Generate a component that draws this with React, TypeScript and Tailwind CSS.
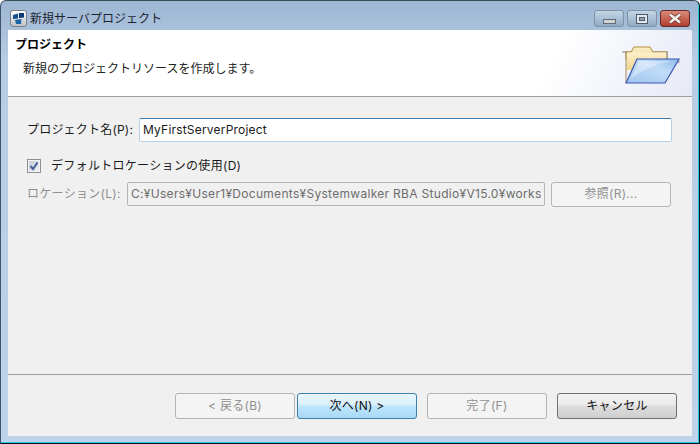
const font = { fontFamily: 'Inter, "Noto Sans CJK JP", sans-serif' };

function AppIcon() {
  return (
    <div className="w-[17px] h-[17px] rounded-[3px] border border-[#7d8086] bg-gradient-to-b from-[#ffffff] to-[#bfc2c6] flex items-center justify-center">
      <svg width="13" height="13" viewBox="0 0 13 13">
        <path d="M1 3 L6 1.5 L6 6.5 L1 7 Z" fill="#15508f" />
        <path d="M7 1 L12 1 L12 5.5 L7 6 Z" fill="#0f3a78" />
        <path d="M3 8 L9.5 7 L9 12 L4 12 Z" fill="#1a66a8" />
      </svg>
    </div>
  );
}

function CaptionButtons() {
  return (
    <div className="flex gap-[3px] self-start mt-[9px]">
      <div className="w-[30px] h-[17px] rounded-[3px] border border-[#7f93a8] bg-gradient-to-b from-[#c4d6e6] to-[#8fabc4] flex items-end justify-center pb-[2px]">
        <div className="w-[13px] h-[5px] bg-[#d4d4d4] border border-[#5f6a78]" />
      </div>
      <div className="w-[30px] h-[17px] rounded-[3px] border border-[#7f93a8] bg-gradient-to-b from-[#c4d6e6] to-[#8fabc4] flex items-center justify-center">
        <div className="w-[12px] h-[10px] bg-[#e4e8ec] border border-[#4e5a6a] flex items-center justify-center">
          <div className="w-[6px] h-[4px] bg-[#8fa4b8] border border-[#4e5a6a]" />
        </div>
      </div>
      <div className="w-[30px] h-[17px] rounded-[3px] border border-[#5f2a2a] bg-gradient-to-b from-[#dc8a78] to-[#b03c2c] flex items-center justify-center">
        <svg width="14" height="11" viewBox="0 0 14 11">
          <path d="M2 1.5 L12 9.5 M12 1.5 L2 9.5" stroke="#5e2b26" strokeWidth="4" />
          <path d="M2 1.5 L12 9.5 M12 1.5 L2 9.5" stroke="#f0ece8" strokeWidth="2.8" />
        </svg>
      </div>
    </div>
  );
}

function Folder() {
  return (
    <svg width="60" height="40" viewBox="0 0 60 40">
      <defs>
        <linearGradient id="back" x1="0" y1="0" x2="0" y2="1">
          <stop offset="0" stopColor="#fdf0cc" />
          <stop offset="1" stopColor="#f0d48a" />
        </linearGradient>
        <linearGradient id="front" x1="0" y1="1" x2="1" y2="0">
          <stop offset="0" stopColor="#9cc4ee" />
          <stop offset="0.6" stopColor="#c2dcf6" />
          <stop offset="1" stopColor="#8fbcea" />
        </linearGradient>
      </defs>
      <path d="M1 6 H47" stroke="#a8a8a8" strokeWidth="1.5" fill="none" />
      <path d="M57 13 L58 17" stroke="#a8a8a8" strokeWidth="1.5" fill="none" />
      <path d="M5 6 H10 L13 1 H29 L32 6 H46 V13 H5 Z" fill="url(#back)" stroke="#b08c3c" strokeWidth="1" />
      <path d="M5.5 6.5 H45.5 V24 H5.5 Z" fill="url(#back)" />
      <path d="M46 6 V13" stroke="#8f8f8f" strokeWidth="1" />
      <path d="M5 5 V36" stroke="#a08c5c" strokeWidth="1" />
      <path d="M5 37 L16 13 H58 L44 37 Z" fill="url(#front)" stroke="#3a54b0" strokeWidth="1.2" />
      <path d="M9 34 L18 15 H50 C38 18 22 22 9 34 Z" fill="#ffffff" opacity="0.35" />
    </svg>
  );
}

function WizardButton({ label, kind }: { label: string; kind: "disabled" | "primary" | "normal" }) {
  const cls =
    kind === "disabled"
      ? "border-[#b4b4b4] bg-[#f4f4f4] text-[#8f8f8f]"
      : kind === "primary"
        ? "border-[#3c7fb1] bg-[linear-gradient(to_bottom,#eaf6fd_0%,#d9f0fc_45%,#bee6fd_50%,#a7d9f5_100%)] text-[#111111]"
        : "border-[#707070] bg-[linear-gradient(to_bottom,#f2f2f2_0%,#ebebeb_45%,#dddddd_50%,#cfcfcf_100%)] text-[#111111]";
  return (
    <div className={`w-[120px] h-[26px] rounded-[3px] border flex items-center justify-center text-[12px] leading-none whitespace-pre tracking-[0.3px] ${cls}`}>
      {label}
    </div>
  );
}

export default function App() {
  return (
    <div
      style={font}
      className="w-[700px] h-[444px] overflow-hidden flex flex-col rounded-t-[6px] border-x border-t border-b border-t-[#3a4a58] border-l-[#3f5468] border-r-[#0c1418] border-b-[#0c1418] shadow-[inset_-1px_-1px_0_#22c8e8] bg-[linear-gradient(to_bottom,#9db6d2_0px,#b6cde4_60px,#bcd3ea_444px)] text-[12px] text-[#1a1a1a]"
    >
      <div className="h-[29px] shrink-0 flex items-start pl-[9px] pr-[9px]">
        <div className="flex items-center gap-[3px] mt-[9px] h-[17px]">
          <AppIcon />
          <span className="text-[12px] leading-none text-[#1c2430]">新規サーバプロジェクト</span>
        </div>
        <div className="flex-1" />
        <CaptionButtons />
      </div>

      <div className="flex-1 mx-[7px] mb-[7px] flex flex-col bg-[#f0f0f0] min-h-0">
        <div className="h-[66px] shrink-0 flex justify-between bg-[linear-gradient(115deg,#ffffff_78%,#e6eaf6_100%)] pr-[11px]">
          <div className="pl-[7px]">
            <div className="mt-[8px] text-[12px] leading-[14px] font-bold text-[#000000]">プロジェクト</div>
            <div className="mt-[10px] pl-[8px] text-[12px] leading-[14px] text-[#222222]">新規のプロジェクトリソースを作成します。</div>
          </div>
          <div className="mt-[16px]">
            <Folder />
          </div>
        </div>
        <div className="h-px shrink-0 bg-[#a0a0a0]" />

        <div className="flex-1 pl-[19px] pr-[20px] pt-[21px]">
          <div className="flex items-center h-[24px]">
            <span className="w-[112px] shrink-0 text-[#1a1a1a] tracking-[0.2px]">プロジェクト名(P):</span>
            <div className="flex-1 h-[24px] rounded-[2px] border border-[#abadb3] border-t-[#3d7bad] border-x-[#b5cfe7] border-b-[#b5cfe7] bg-white pl-[3px] flex items-center text-[#1a1a1a] tracking-[0.2px]">
              MyFirstServerProject
            </div>
          </div>

          <div className="flex items-center mt-[16px] h-[16px]">
            <div className="w-[14px] h-[14px] border border-[#8e8f8f] bg-[#f4f4f4] p-[1px]">
              <div className="w-full h-full bg-[linear-gradient(135deg,#c4cbd8,#eef0f4)] flex items-center justify-center">
                <svg width="10" height="10" viewBox="0 0 10 10">
                  <path d="M1.5 5 L4 8 L8.5 1.5" fill="none" stroke="#4a5f97" strokeWidth="2" />
                </svg>
              </div>
            </div>
            <span className="ml-[10px] text-[#1a1a1a] tracking-[0.3px]">デフォルトロケーションの使用(D)</span>
          </div>

          <div className="flex items-center mt-[7px] h-[26px] pr-[1px]">
            <span className="w-[100px] shrink-0 text-[#8f8f8f] tracking-[0.3px]">ロケーション(L):</span>
            <div className="w-[418px] h-[24px] rounded-[2px] border border-[#b4b4b4] bg-[#f0f0f0] px-[3px] flex items-center text-[#6d6d6d] tracking-[0.3px]">
              <div className="overflow-hidden whitespace-nowrap">C:¥Users¥User1¥Documents¥Systemwalker RBA Studio¥V15.0¥workspace</div>
            </div>
            <div className="ml-[6px] w-[120px] h-[25px] rounded-[3px] border border-[#b4b4b4] bg-[#f4f4f4] flex items-center justify-center text-[#8f8f8f] tracking-[0.3px]">
              参照(R)...
            </div>
          </div>
        </div>

        <div className="h-px shrink-0 bg-[#a0a0a0]" />
        <div className="h-[61px] shrink-0 flex justify-end pr-[15px] pt-[18px]">
          <WizardButton label="< 戻る(B)" kind="disabled" />
          <div className="w-[2px]" />
          <WizardButton label="次へ(N) >" kind="primary" />
          <div className="w-[10px]" />
          <WizardButton label="完了(F)" kind="disabled" />
          <div className="w-[10px]" />
          <WizardButton label="キャンセル" kind="normal" />
        </div>
      </div>
    </div>
  );
}
